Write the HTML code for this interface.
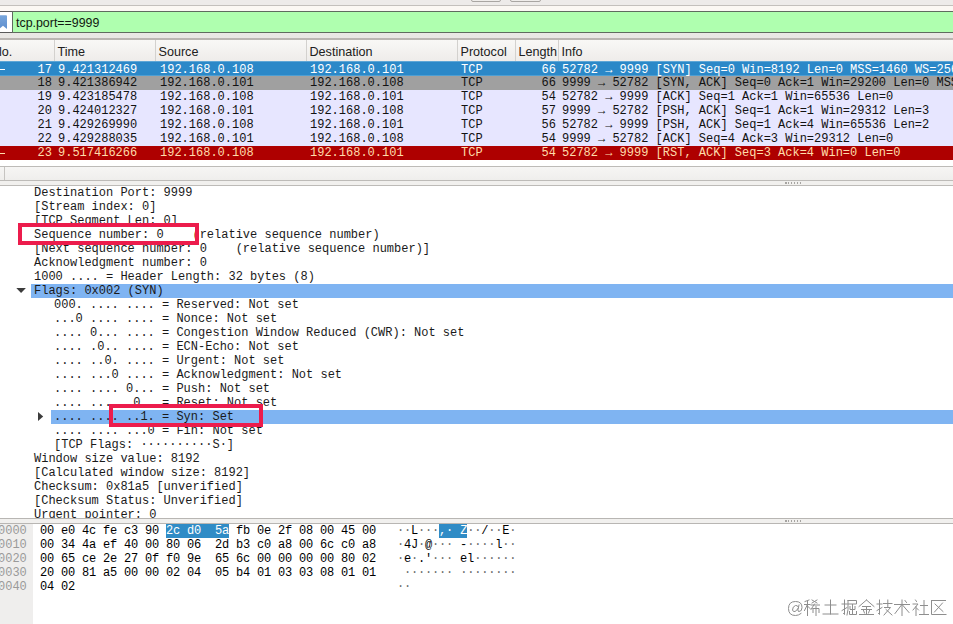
<!DOCTYPE html>
<html><head><meta charset="utf-8">
<style>
*{margin:0;padding:0;box-sizing:border-box}
html,body{width:953px;height:624px;overflow:hidden;background:#fff}
body{position:relative;font-family:"Liberation Sans",sans-serif}
.a{position:absolute}
.m{font-family:"Liberation Mono",monospace;font-size:12px;line-height:14px;white-space:pre}
#top{left:0;top:0;width:953px;height:6px;background:#edebe9;border-bottom:1px solid #c3c0bc}
#fbar{left:0;top:6px;width:953px;height:34px;background:linear-gradient(#fbf8f3 0,#fbf8f3 5px,#eae8e5 27px,#e9e7e4 31px);border-bottom:2px solid #bab6b2}
#bm{left:0;top:11px;width:12px;height:22px;background:#fff;border-top:1px solid #5a5a5a;border-bottom:1px solid #5a5a5a;overflow:hidden}
#fld{left:12px;top:11px;width:941px;height:22px;background:#afffaf;border:1px solid #5f6b5f;border-right:none;font-size:12.4px;line-height:22px;padding-left:3px;color:#101810}
#hdr{left:0;top:40px;width:953px;height:22px;background:linear-gradient(#f9f8f6,#eeecea);border-bottom:1px solid #d2d0cd}
.hc{top:0;height:21px;border-left:1px solid #d3d1ce;font-size:12.6px;line-height:25px;padding-left:2.5px;color:#202020}
.row{left:0;width:953px;height:14px;overflow:hidden}
.row span{top:0px}
.r0 span{top:2px}
.r0 .dash{top:8px}
.r0{background:#2b88c8;color:#fff;box-shadow:inset 0 1px #5ea6d6,inset 0 -1px #4d9fd4}
.r1{background:#a0a0a0;color:#121212}
.r2{background:#e7e6ff;color:#121212}
.r3{background:#ae0000;color:#ffdcaa}
.dash{left:0;top:7px;width:5px;height:1px;background:currentColor}
.sel{height:14px;background:#7fb4f2}
.dt{color:#1a1a1a}
.off{color:#9a9a9a}
.hx{letter-spacing:-0.2px}
.hx i{font-style:normal;color:#6a6a6a}
.hl i{color:#fff}
.hl{background:#308cc6;color:#fff;display:inline-block;height:14px;vertical-align:top}
.box{border:4px solid #ec1c4c}
.dots{width:17px;height:2px;background:repeating-linear-gradient(90deg,#a6a4a1 0 1.5px,transparent 1.5px 3px)}
</style></head><body>
<div id="top" class="a"></div>
<div id="fbar" class="a"></div>
<div class="a" style="left:471px;top:-6px;width:30px;height:8px;border:1px solid #a9a6a2;border-radius:2px;background:#efedea"></div>
<div class="a" style="left:510px;top:-6px;width:31px;height:8px;border:1px solid #a9a6a2;border-radius:2px;background:#efedea"></div>
<div id="bm" class="a"><svg width="13" height="20" style="position:absolute;left:0;top:0"><defs><linearGradient id="bg" x1="0" y1="0" x2="0" y2="1"><stop offset="0" stop-color="#78a6dc"/><stop offset="1" stop-color="#5f8fce"/></linearGradient></defs><path d="M-4 3.2 L6 3.2 Q7 3.2 7 4.2 L7 17 L3 13.8 L-1 17 L-4 17 Z" fill="url(#bg)"/></svg></div>
<div id="fld" class="a">tcp.port==9999</div>
<div id="hdr" class="a">
 <div class="a hc" style="left:-1px;width:56px;border-left:none;padding-left:0">lo.</div>
 <div class="a hc" style="left:54px;width:102px">Time</div>
 <div class="a hc" style="left:155px;width:152px">Source</div>
 <div class="a hc" style="left:306px;width:152px">Destination</div>
 <div class="a hc" style="left:457px;width:59px">Protocol</div>
 <div class="a hc" style="left:515px;width:44px">Length</div>
 <div class="a hc" style="left:558px;width:400px">Info</div>
</div>
<div class="a row r0 m" style="top:62px;top:61px;height:15px;padding-top:1px"><div class="a dash"></div><span class="a" style="right:901px">17</span><span class="a" style="left:58px">9.421312469</span><span class="a" style="left:160px">192.168.0.108</span><span class="a" style="left:310px">192.168.0.101</span><span class="a" style="left:461px">TCP</span><span class="a" style="right:397px">66</span><span class="a" style="left:562px">52782 → 9999 [SYN] Seq=0 Win=8192 Len=0 MSS=1460 WS=256 SACK_PERM=1</span></div><div class="a row r1 m" style="top:76px"><span class="a" style="right:901px">18</span><span class="a" style="left:58px">9.421386942</span><span class="a" style="left:160px">192.168.0.101</span><span class="a" style="left:310px">192.168.0.108</span><span class="a" style="left:461px">TCP</span><span class="a" style="right:397px">66</span><span class="a" style="left:562px">9999 → 52782 [SYN, ACK] Seq=0 Ack=1 Win=29200 Len=0 MSS=1460</span></div><div class="a row r2 m" style="top:90px"><span class="a" style="right:901px">19</span><span class="a" style="left:58px">9.423185478</span><span class="a" style="left:160px">192.168.0.108</span><span class="a" style="left:310px">192.168.0.101</span><span class="a" style="left:461px">TCP</span><span class="a" style="right:397px">54</span><span class="a" style="left:562px">52782 → 9999 [ACK] Seq=1 Ack=1 Win=65536 Len=0</span></div><div class="a row r2 m" style="top:104px"><span class="a" style="right:901px">20</span><span class="a" style="left:58px">9.424012327</span><span class="a" style="left:160px">192.168.0.101</span><span class="a" style="left:310px">192.168.0.108</span><span class="a" style="left:461px">TCP</span><span class="a" style="right:397px">57</span><span class="a" style="left:562px">9999 → 52782 [PSH, ACK] Seq=1 Ack=1 Win=29312 Len=3</span></div><div class="a row r2 m" style="top:118px"><span class="a" style="right:901px">21</span><span class="a" style="left:58px">9.429269990</span><span class="a" style="left:160px">192.168.0.108</span><span class="a" style="left:310px">192.168.0.101</span><span class="a" style="left:461px">TCP</span><span class="a" style="right:397px">56</span><span class="a" style="left:562px">52782 → 9999 [PSH, ACK] Seq=1 Ack=4 Win=65536 Len=2</span></div><div class="a row r2 m" style="top:132px"><span class="a" style="right:901px">22</span><span class="a" style="left:58px">9.429288035</span><span class="a" style="left:160px">192.168.0.101</span><span class="a" style="left:310px">192.168.0.108</span><span class="a" style="left:461px">TCP</span><span class="a" style="right:397px">54</span><span class="a" style="left:562px">9999 → 52782 [ACK] Seq=4 Ack=3 Win=29312 Len=0</span></div><div class="a row r3 m" style="top:146px"><div class="a dash"></div><span class="a" style="right:901px">23</span><span class="a" style="left:58px">9.517416266</span><span class="a" style="left:160px">192.168.0.108</span><span class="a" style="left:310px">192.168.0.101</span><span class="a" style="left:461px">TCP</span><span class="a" style="right:397px">54</span><span class="a" style="left:562px">52782 → 9999 [RST, ACK] Seq=3 Ack=4 Win=0 Len=0</span></div>
<div id="hscroll" class="a" style="left:0;top:166px;width:953px;height:15px;background:linear-gradient(#f6f5f4,#efeeec);border-top:1px solid #bdbbb8;border-bottom:1px solid #bdbbb8"></div>
<div class="a" style="left:4px;top:167px;width:1px;height:13px;background:#c6c4c1"></div>
<div id="split1" class="a" style="left:0;top:181px;width:953px;height:5px;background:#f1f0ee;border-bottom:1px solid #bdbbb8"></div>
<div class="a dots" style="left:785px;top:182px"></div>
<div class="a m dt" style="left:34px;top:186px">Destination Port: 9999</div><div class="a m dt" style="left:34px;top:200px">[Stream index: 0]</div><div class="a m dt" style="left:34px;top:214px">[TCP Segment Len: 0]</div><div class="a m dt" style="left:34px;top:228px">Sequence number: 0    (relative sequence number)</div><div class="a m dt" style="left:34px;top:242px">[Next sequence number: 0    (relative sequence number)]</div><div class="a m dt" style="left:34px;top:256px">Acknowledgment number: 0</div><div class="a m dt" style="left:34px;top:270px">1000 .... = Header Length: 32 bytes (8)</div><div class="a sel" style="left:31px;top:284px;width:922px"></div><svg class="a" style="left:16px;top:284px" width="12" height="14"><path d="M0.3 4 L9.9 4 L5.1 9 Z" fill="#3c3c3c"/></svg><div class="a m dt" style="left:34px;top:284px">Flags: 0x002 (SYN)</div><div class="a m dt" style="left:54px;top:298px">000. .... .... = Reserved: Not set</div><div class="a m dt" style="left:54px;top:312px">...0 .... .... = Nonce: Not set</div><div class="a m dt" style="left:54px;top:326px">.... 0... .... = Congestion Window Reduced (CWR): Not set</div><div class="a m dt" style="left:54px;top:340px">.... .0.. .... = ECN-Echo: Not set</div><div class="a m dt" style="left:54px;top:354px">.... ..0. .... = Urgent: Not set</div><div class="a m dt" style="left:54px;top:368px">.... ...0 .... = Acknowledgment: Not set</div><div class="a m dt" style="left:54px;top:382px">.... .... 0... = Push: Not set</div><div class="a m dt" style="left:54px;top:396px">.... .... .0.. = Reset: Not set</div><div class="a sel" style="left:51px;top:410px;width:902px"></div><svg class="a" style="left:36px;top:410px" width="12" height="14"><path d="M2 2 L7.2 6.5 L2 11 Z" fill="#3c3c3c"/></svg><div class="a m dt" style="left:54px;top:410px">.... .... ..1. = Syn: Set</div><div class="a m dt" style="left:54px;top:424px">.... .... ...0 = Fin: Not set</div><div class="a m dt" style="left:54px;top:438px">[TCP Flags: ··········S·]</div><div class="a m dt" style="left:34px;top:452px">Window size value: 8192</div><div class="a m dt" style="left:34px;top:466px">[Calculated window size: 8192]</div><div class="a m dt" style="left:34px;top:480px">Checksum: 0x81a5 [unverified]</div><div class="a m dt" style="left:34px;top:494px">[Checksum Status: Unverified]</div><div class="a m dt" style="left:34px;top:508px">Urgent pointer: 0</div>
<div class="a box" style="left:18px;top:223px;width:181px;height:22px"></div>
<div class="a box" style="left:109px;top:404px;width:154px;height:23px"></div>
<div id="split2" class="a" style="left:0;top:518px;width:953px;height:6px;background:#f1f0ee;border-top:1px solid #b8b6b3;border-bottom:1px solid #b8b6b3"></div>
<div class="a dots" style="left:785px;top:520px"></div>
<div id="gutter" class="a" style="left:0;top:524px;width:33px;height:100px;background:#efeeed"></div>
<div class="a m off" style="left:-2px;top:524px">0000</div><div class="a m hx" style="left:40px;top:524px">00 e0 4c fe c3 90 <span class=hl>2c d0  5a</span> fb 0e 2f 08 00 45 00</div><div class="a m hx" style="left:397px;top:524px"><i>·</i><i>·</i>L<i>·</i><i>·</i><i>·</i><span class=hl>,<i>·</i> Z</span><i>·</i><i>·</i>/<i>·</i><i>·</i>E<i>·</i></div><div class="a m off" style="left:-2px;top:538px">0010</div><div class="a m hx" style="left:40px;top:538px">00 34 4a ef 40 00 80 06  2d b3 c0 a8 00 6c c0 a8</div><div class="a m hx" style="left:397px;top:538px"><i>·</i>4J<i>·</i>@<i>·</i><i>·</i><i>·</i> -<i>·</i><i>·</i><i>·</i><i>·</i>l<i>·</i><i>·</i></div><div class="a m off" style="left:-2px;top:552px">0020</div><div class="a m hx" style="left:40px;top:552px">00 65 ce 2e 27 0f f0 9e  65 6c 00 00 00 00 80 02</div><div class="a m hx" style="left:397px;top:552px"><i>·</i>e<i>·</i>.'<i>·</i><i>·</i><i>·</i> el<i>·</i><i>·</i><i>·</i><i>·</i><i>·</i><i>·</i></div><div class="a m off" style="left:-2px;top:566px">0030</div><div class="a m hx" style="left:40px;top:566px">20 00 81 a5 00 00 02 04  05 b4 01 03 03 08 01 01</div><div class="a m hx" style="left:397px;top:566px"> <i>·</i><i>·</i><i>·</i><i>·</i><i>·</i><i>·</i><i>·</i> <i>·</i><i>·</i><i>·</i><i>·</i><i>·</i><i>·</i><i>·</i><i>·</i></div><div class="a m off" style="left:-2px;top:580px">0040</div><div class="a m hx" style="left:40px;top:580px">04 02</div><div class="a m hx" style="left:397px;top:580px"><i>·</i><i>·</i></div>
<svg class="a" style="left:786px;top:598px" width="162" height="20" viewBox="0 0 162 20">
<g fill="none" stroke="#8e8e8e" stroke-width="1" stroke-linecap="square">
<g transform="translate(1.5,2)"><path d="M13.5 13.5 Q11 15.5 8 15.5 Q1 15.5 1 8.5 Q1 1.5 8 1.5 Q14.5 1.5 14.5 7.5 Q14.5 11.5 11.5 11.5 Q10 11.5 10.5 9.5 L11.5 5"/><path d="M10.8 7 Q10 5 8 5.5 Q5 6.5 5 10 Q5.5 12 7.5 11.5 Q9.5 10.5 10.5 8.5"/></g>
<g transform="translate(18,1.5)"><path d="M5 0.5 L1 2"/><path d="M0.5 5 H6"/><path d="M3.5 2 V16"/><path d="M3.5 5 L0.5 11"/><path d="M3.5 6.5 L6 9"/><path d="M8 0.5 L13 3.5 M13 0.5 L8 3.5"/><path d="M7 5.5 H15.5"/><path d="M10.5 4.5 L7 10"/><path d="M9 9 V13 M9 9 H15 V13"/><path d="M12 7 V16"/></g>
<g transform="translate(36.5,1.5)"><path d="M2.5 5.5 H13.5"/><path d="M8 0.5 V14.5"/><path d="M0.5 14.5 H15.5"/></g>
<g transform="translate(55.5,1.5)"><path d="M0.5 4.5 H5.5"/><path d="M3 0.5 V15 L2 14"/><path d="M0.5 11 L5.5 8"/><path d="M6.5 1 H15 V4.5 H6.5"/><path d="M6.5 1 V10 L5.5 15.5"/><path d="M11 5 V15"/><path d="M8.5 7 V10 H13.5 V7"/><path d="M8 12 V15 H15 V12"/></g>
<g transform="translate(72.5,1.5)"><path d="M8 0.5 L0.5 7 M8 0.5 L15.5 7"/><path d="M4 7 H12"/><path d="M3 10 H13"/><path d="M8 7 V15"/><path d="M5 11 L6 13.5 M11 11 L10 13.5"/><path d="M1 15 H15"/></g>
<g transform="translate(90.5,1.5)"><path d="M0.5 4.5 H5.5"/><path d="M3 0.5 V15 L2 14"/><path d="M0.5 11 L5.5 8"/><path d="M7 4 H15.5"/><path d="M11.3 0.5 V7"/><path d="M8 8 H14 L7.5 15.5"/><path d="M9.5 10 L15.5 15.5"/></g>
<g transform="translate(108,1.5)"><path d="M0.5 5 H15.5"/><path d="M8 0.5 V16"/><path d="M7.5 5.5 L1 14"/><path d="M8.5 5.5 L15 13"/><path d="M11 1 L12.5 3"/></g>
<g transform="translate(126.5,1.5)"><path d="M3 0.5 L4 2"/><path d="M0.5 4.5 H5.5 L0.5 10.5"/><path d="M3.5 7 V16"/><path d="M4 8.5 L6 10.5"/><path d="M8 6 H15"/><path d="M11.5 1 V15"/><path d="M7 15 H16"/></g>
<g transform="translate(144.5,1.5)"><path d="M1 1 H15"/><path d="M1 1 V15 H15.5"/><path d="M12 3.5 L4 12.5"/><path d="M4.5 4.5 L12.5 12"/></g>
</g></svg>
</body></html>
